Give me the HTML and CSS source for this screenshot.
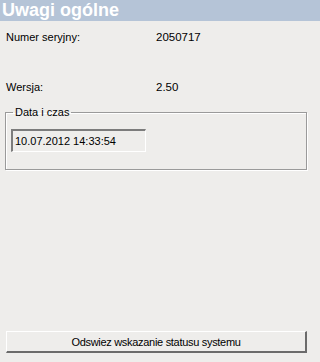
FILE: index.html
```html
<!DOCTYPE html>
<html>
<head>
<meta charset="utf-8">
<link rel="stylesheet" href="styles.css">
</head>
<body>
<div class="page">
  <div class="header">Uwagi ogólne</div>
  <div class="row row-first"><span class="label">Numer seryjny:</span><span class="value">2050717</span></div>
  <div class="row row-second"><span class="label">Wersja:</span><span class="value">2.50</span></div>
  <fieldset class="group">
    <legend class="legend">Data i czas</legend>
    <div class="field">10.07.2012 14:33:54</div>
  </fieldset>
  <div class="spacer"></div>
  <div class="btn-wrap"><button class="btn">Odswiez wskazanie statusu systemu</button></div>
</div>
</body>
</html>
```
FILE: styles.css
```css
html, body {
  margin: 0;
  padding: 0;
  background: #eeedeb;
}
.page {
  width: 320px;
  height: 362px;
  display: flex;
  flex-direction: column;
  font-family: "Liberation Sans", Arial, sans-serif;
  font-size: 11px;
  color: #000;
}
.header {
  height: 21px;
  background: #b5c4d7;
  color: #fff;
  font-weight: bold;
  font-size: 18px;
  line-height: 21px;
  padding-left: 2px;
}
.row {
  display: flex;
  padding-left: 6px;
  height: 14px;
  line-height: 14px;
}
.row-first { margin-top: 9px; }
.row-second { margin-top: 36px; }
.label { width: 150px; }
.value { font-size: 11.5px; }
.group {
  margin: 12px 13px 0 5px;
  padding: 0 0 17px 5px;
  border: 1px solid #9a9a9a;
  box-shadow: 1px 1px 0 #fff, inset 1px 1px 0 #fff;
  min-width: 0;
}
.legend {
  padding: 0 2px;
  margin-left: 2px;
  font-size: 11px;
  line-height: 12px;
}
.field {
  margin-top: 11px;
  width: 130px;
  height: 20px;
  line-height: 20px;
  padding-left: 2px;
  font-size: 11px;
  border-top: 2px solid #7c7c7c;
  border-left: 2px solid #7c7c7c;
  border-right: 1px solid #fff;
  border-bottom: 1px solid #fff;
  background: #eeedeb;
}
.spacer { flex: 1; }
.btn-wrap {
  padding: 0 13px 9px 6px;
}
.btn {
  width: 100%;
  height: 22px;
  font-family: "Liberation Sans", Arial, sans-serif;
  font-size: 11px;
  letter-spacing: -0.3px;
  color: #000;
  background: #eeedeb;
  border-top: 1px solid #fff;
  border-left: 1px solid #fff;
  border-right: 2px solid #6b6b6b;
  border-bottom: 2px solid #6b6b6b;
  padding: 0;
  display: block;
}
```
